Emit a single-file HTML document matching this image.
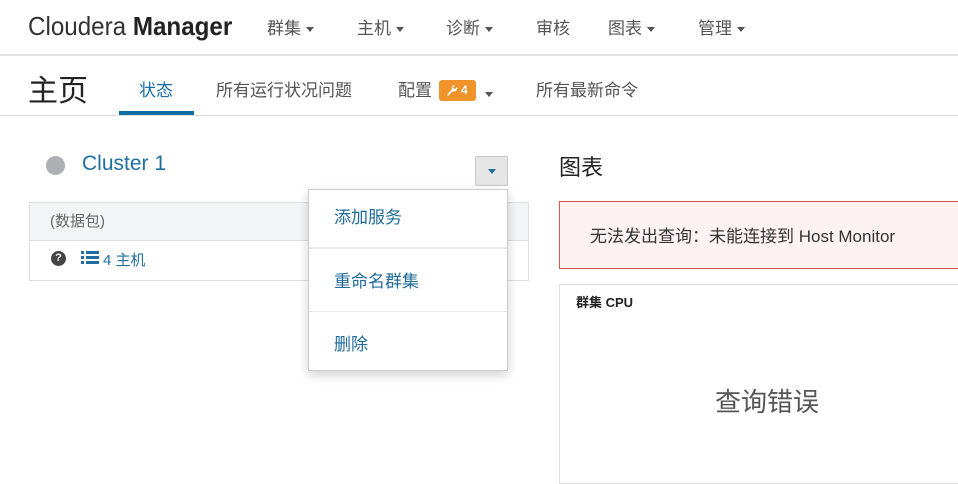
<!DOCTYPE html>
<html><head><meta charset="utf-8"><style>
*{margin:0;padding:0;box-sizing:border-box}
body{width:958px;height:466px;overflow:hidden;background:#fff;font-family:"Liberation Sans","Noto Sans CJK SC",sans-serif;color:#333;position:relative}
.a{position:absolute;white-space:nowrap}
.nav{font-size:17px;color:#555;top:14px}
.car{display:inline-block;width:0;height:0;border-left:4px solid transparent;border-right:4px solid transparent;border-top:5px solid #555;vertical-align:middle;margin-left:5px}
.tab{font-size:17px;color:#555;top:76px}
.mi{font-size:17px;color:#1f6b9a;left:334px}
</style></head><body>
<div class="a" style="left:28px;top:11px;font-size:26px;color:#333;transform:scaleX(0.93);transform-origin:0 0">Cloudera <b style="color:#222">Manager</b></div>
<div class="a nav" style="left:267px">群集<span class="car"></span></div>
<div class="a nav" style="left:357px">主机<span class="car"></span></div>
<div class="a nav" style="left:446px">诊断<span class="car"></span></div>
<div class="a nav" style="left:536px">审核</div>
<div class="a nav" style="left:608px">图表<span class="car"></span></div>
<div class="a nav" style="left:698px">管理<span class="car"></span></div>
<div class="a" style="left:0;top:54px;width:958px;height:2px;background:#e2e2e2"></div>

<div class="a" style="left:28px;top:66px;font-size:30px;color:#222">主页</div>
<div class="a tab" style="left:139px;color:#1a70a6">状态</div>
<div class="a" style="left:119px;top:111px;width:75px;height:4px;background:#0b6fa4"></div>
<div class="a tab" style="left:216px">所有运行状况问题</div>
<div class="a tab" style="left:398px">配置</div>
<div class="a" style="left:439px;top:80px;width:37px;height:21px;background:#f0932b;border-radius:3px"></div>
<svg class="a" style="left:446px;top:84px" width="12" height="13" viewBox="0 0 12 13"><path d="M9 1 A3 3 0 0 0 6 5 L1 11 L2 12 L7 7 A3 3 0 0 0 11 3 L9 5 L7 4 L8 2 Z" fill="#fff"/></svg>
<div class="a" style="left:461px;top:83px;font-size:12px;font-weight:bold;color:#fff">4</div>
<div class="a" style="left:485px;top:86px"><span class="car" style="margin:0"></span></div>
<div class="a tab" style="left:536px">所有最新命令</div>
<div class="a" style="left:0;top:115px;width:958px;height:1px;background:#ddd"></div>

<div class="a" style="left:46px;top:156px;width:19px;height:19px;border-radius:50%;background:#aeb0b3"></div>
<div class="a" style="left:82px;top:152px;font-size:21px;color:#1f6fa3">Cluster 1</div>
<div class="a" style="left:475px;top:156px;width:33px;height:30px;background:#e6e6e6;border:1px solid #c8c8c8;border-radius:2px"><span class="a" style="left:12px;top:12px;border-left:4px solid transparent;border-right:4px solid transparent;border-top:5px solid #1f6fa3"></span></div>

<div class="a" style="left:29px;top:202px;width:500px;height:79px;border:1px solid #ddd"></div>
<div class="a" style="left:30px;top:203px;width:498px;height:38px;background:#f4f5f6;border-bottom:1px solid #ddd"></div>
<div class="a" style="left:50px;top:210px;font-size:15px;color:#666">(数据包)</div>
<div class="a" style="left:51px;top:251px;width:15px;height:15px;border-radius:50%;background:#444;color:#fff;font-size:11px;font-weight:bold;text-align:center;line-height:15px">?</div>
<svg class="a" style="left:81px;top:251px" width="18" height="14"><g fill="#1f6fa3"><rect x="0" y="0" width="3" height="3"/><rect x="0" y="5" width="3" height="3"/><rect x="0" y="10" width="3" height="3"/><rect x="5" y="0" width="13" height="3"/><rect x="5" y="5" width="13" height="3"/><rect x="5" y="10" width="13" height="3"/></g></svg>
<div class="a" style="left:103px;top:249px;font-size:15px;color:#1f6fa3">4 主机</div>

<div class="a" style="left:308px;top:189px;width:200px;height:182px;background:#fff;border:1px solid #ccc;box-shadow:0 4px 10px rgba(0,0,0,.18)"></div>
<div class="a mi" style="top:203px">添加服务</div>
<div class="a" style="left:309px;top:247px;width:198px;height:2px;background:#e8e8e8"></div>
<div class="a mi" style="top:267px">重命名群集</div>
<div class="a" style="left:309px;top:311px;width:198px;height:1px;background:#e8e8e8"></div>
<div class="a mi" style="top:330px">删除</div>

<div class="a" style="left:559px;top:150px;font-size:22px;color:#222">图表</div>
<div class="a" style="left:559px;top:201px;width:410px;height:68px;background:#fdf2f2;border:1px solid #d9534f"></div>
<div class="a" style="left:590px;top:222px;font-size:17px;color:#333">无法发出查询：未能连接到 Host Monitor</div>
<div class="a" style="left:559px;top:284px;width:410px;height:200px;border:1px solid #ddd"></div>
<div class="a" style="left:576px;top:292px;font-size:13px;font-weight:bold;color:#222">群集 CPU</div>
<div class="a" style="left:715px;top:382px;font-size:26px;color:#555">查询错误</div>
</body></html>
